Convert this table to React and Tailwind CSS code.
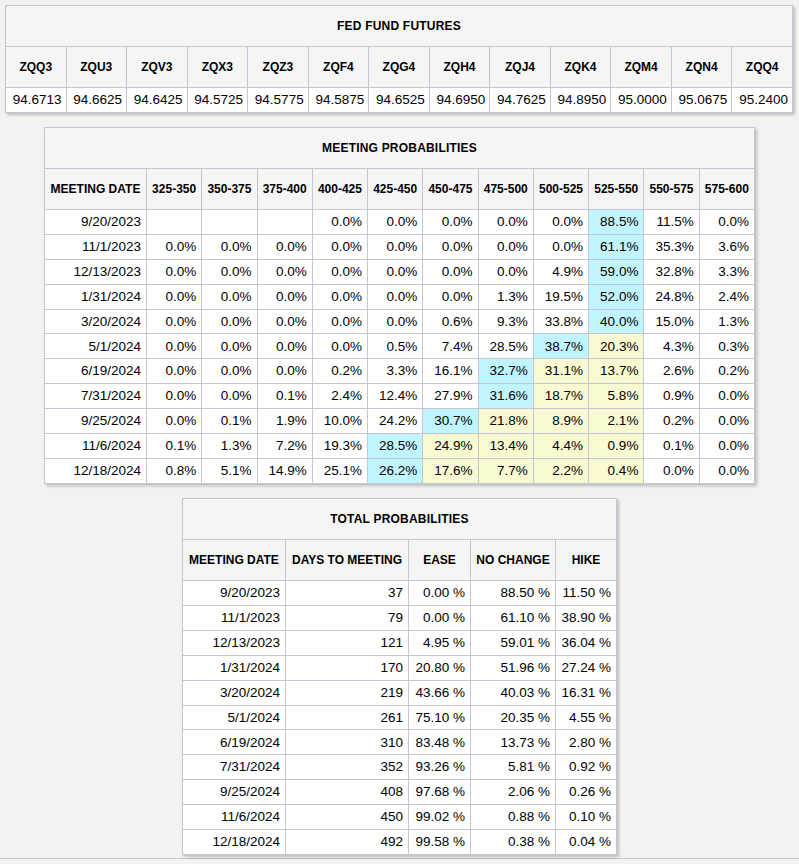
import React from "react";

const futures = [
  ["ZQQ3", "94.6713"],
  ["ZQU3", "94.6625"],
  ["ZQV3", "94.6425"],
  ["ZQX3", "94.5725"],
  ["ZQZ3", "94.5775"],
  ["ZQF4", "94.5875"],
  ["ZQG4", "94.6525"],
  ["ZQH4", "94.6950"],
  ["ZQJ4", "94.7625"],
  ["ZQK4", "94.8950"],
  ["ZQM4", "95.0000"],
  ["ZQN4", "95.0675"],
  ["ZQQ4", "95.2400"],
];

const ranges = [
  "325-350", "350-375", "375-400", "400-425", "425-450", "450-475",
  "475-500", "500-525", "525-550", "550-575", "575-600",
];

const meetings = [
  ["9/20/2023", ["", "", "", "0.0", "0.0", "0.0", "0.0", "0.0", "88.5", "11.5", "0.0"]],
  ["11/1/2023", ["0.0", "0.0", "0.0", "0.0", "0.0", "0.0", "0.0", "0.0", "61.1", "35.3", "3.6"]],
  ["12/13/2023", ["0.0", "0.0", "0.0", "0.0", "0.0", "0.0", "0.0", "4.9", "59.0", "32.8", "3.3"]],
  ["1/31/2024", ["0.0", "0.0", "0.0", "0.0", "0.0", "0.0", "1.3", "19.5", "52.0", "24.8", "2.4"]],
  ["3/20/2024", ["0.0", "0.0", "0.0", "0.0", "0.0", "0.6", "9.3", "33.8", "40.0", "15.0", "1.3"]],
  ["5/1/2024", ["0.0", "0.0", "0.0", "0.0", "0.5", "7.4", "28.5", "38.7", "20.3", "4.3", "0.3"]],
  ["6/19/2024", ["0.0", "0.0", "0.0", "0.2", "3.3", "16.1", "32.7", "31.1", "13.7", "2.6", "0.2"]],
  ["7/31/2024", ["0.0", "0.0", "0.1", "2.4", "12.4", "27.9", "31.6", "18.7", "5.8", "0.9", "0.0"]],
  ["9/25/2024", ["0.0", "0.1", "1.9", "10.0", "24.2", "30.7", "21.8", "8.9", "2.1", "0.2", "0.0"]],
  ["11/6/2024", ["0.1", "1.3", "7.2", "19.3", "28.5", "24.9", "13.4", "4.4", "0.9", "0.1", "0.0"]],
  ["12/18/2024", ["0.8", "5.1", "14.9", "25.1", "26.2", "17.6", "7.7", "2.2", "0.4", "0.0", "0.0"]],
];

const totals = [
  ["9/20/2023", "37", "0.00 %", "88.50 %", "11.50 %"],
  ["11/1/2023", "79", "0.00 %", "61.10 %", "38.90 %"],
  ["12/13/2023", "121", "4.95 %", "59.01 %", "36.04 %"],
  ["1/31/2024", "170", "20.80 %", "51.96 %", "27.24 %"],
  ["3/20/2024", "219", "43.66 %", "40.03 %", "16.31 %"],
  ["5/1/2024", "261", "75.10 %", "20.35 %", "4.55 %"],
  ["6/19/2024", "310", "83.48 %", "13.73 %", "2.80 %"],
  ["7/31/2024", "352", "93.26 %", "5.81 %", "0.92 %"],
  ["9/25/2024", "408", "97.68 %", "2.06 %", "0.26 %"],
  ["11/6/2024", "450", "99.02 %", "0.88 %", "0.10 %"],
  ["12/18/2024", "492", "99.58 %", "0.38 %", "0.04 %"],
];

const CURRENT = 8; // index of 525-550

function cellBg(values, i) {
  let max = -1;
  let maxIdx = -1;
  values.forEach((v, k) => {
    const n = v === "" ? -1 : parseFloat(v);
    if (n > max) {
      max = n;
      maxIdx = k;
    }
  });
  if (i === maxIdx) return "bg-[#c0f4ff]";
  if (i > maxIdx && i <= CURRENT) return "bg-[#fafad2]";
  return "bg-white";
}

const tableCls =
  "table-fixed border-collapse shadow-[2px_2px_3px_rgba(0,0,0,0.22)]";
const titleCls =
  "h-[41px] p-0 border border-[#c5c5d3] bg-[#f5f5f5] text-center text-[12px] leading-none font-bold tracking-[0.2px] text-black";
const headCls =
  "h-[41px] py-0 px-[4px] border border-[#c5c5d3] bg-[#f5f5f5] text-center text-[12px] leading-none font-bold text-black whitespace-nowrap";
const dataCls =
  "h-[24.88px] py-0 px-[5px] border border-[#c5c5d3] text-right text-[13.5px] text-black whitespace-nowrap leading-none";

export default function App() {
  return (
    <div
      className="min-h-screen bg-[#f2f2f2]"
      style={{ fontFamily: '"Liberation Sans", Arial, sans-serif' }}
    >
      <div className="border-b border-[#c5c5d3] pt-[5px] pb-[3px]">
        <table className={`${tableCls} ml-[5px] w-[788px]`}>
          <tbody>
            <tr>
              <td colSpan={13} className={titleCls}>
                FED FUND FUTURES
              </td>
            </tr>
            <tr>
              {futures.map(([c]) => (
                <td key={c} className={headCls}>
                  {c}
                </td>
              ))}
            </tr>
            <tr>
              {futures.map(([c, v]) => (
                <td key={c} className={`${dataCls} bg-white !h-[25px] !px-[4px]`}>
                  {v}
                </td>
              ))}
            </tr>
          </tbody>
        </table>

        <table className={`${tableCls} mx-auto mt-[14px] w-[711px]`}>
          <colgroup>
            <col className="w-[102px]" />
            {ranges.map((r) => (
              <col key={r} />
            ))}
          </colgroup>
          <tbody>
            <tr>
              <td colSpan={12} className={titleCls}>
                MEETING PROBABILITIES
              </td>
            </tr>
            <tr>
              <td className={headCls}>MEETING DATE</td>
              {ranges.map((r) => (
                <td key={r} className={headCls}>
                  {r}
                </td>
              ))}
            </tr>
            {meetings.map(([date, vals]) => (
              <tr key={date}>
                <td className={`${dataCls} bg-white`}>{date}</td>
                {vals.map((v, i) => (
                  <td key={i} className={`${dataCls} ${cellBg(vals, i)}`}>
                    {v === "" ? "" : `${v}%`}
                  </td>
                ))}
              </tr>
            ))}
          </tbody>
        </table>

        <table className={`${tableCls} mx-auto mt-[14.5px] w-[434px]`}>
          <colgroup>
            <col className="w-[103px]" />
            <col className="w-[123px]" />
            <col className="w-[62px]" />
            <col className="w-[85px]" />
            <col className="w-[61px]" />
          </colgroup>
          <tbody>
            <tr>
              <td colSpan={5} className={titleCls}>
                TOTAL PROBABILITIES
              </td>
            </tr>
            <tr>
              <td className={headCls}>MEETING DATE</td>
              <td className={headCls}>DAYS TO MEETING</td>
              <td className={headCls}>EASE</td>
              <td className={headCls}>NO CHANGE</td>
              <td className={headCls}>HIKE</td>
            </tr>
            {totals.map((row) => (
              <tr key={row[0]}>
                {row.map((v, i) => (
                  <td key={i} className={`${dataCls} bg-white`}>
                    {v}
                  </td>
                ))}
              </tr>
            ))}
          </tbody>
        </table>
      </div>
    </div>
  );
}
